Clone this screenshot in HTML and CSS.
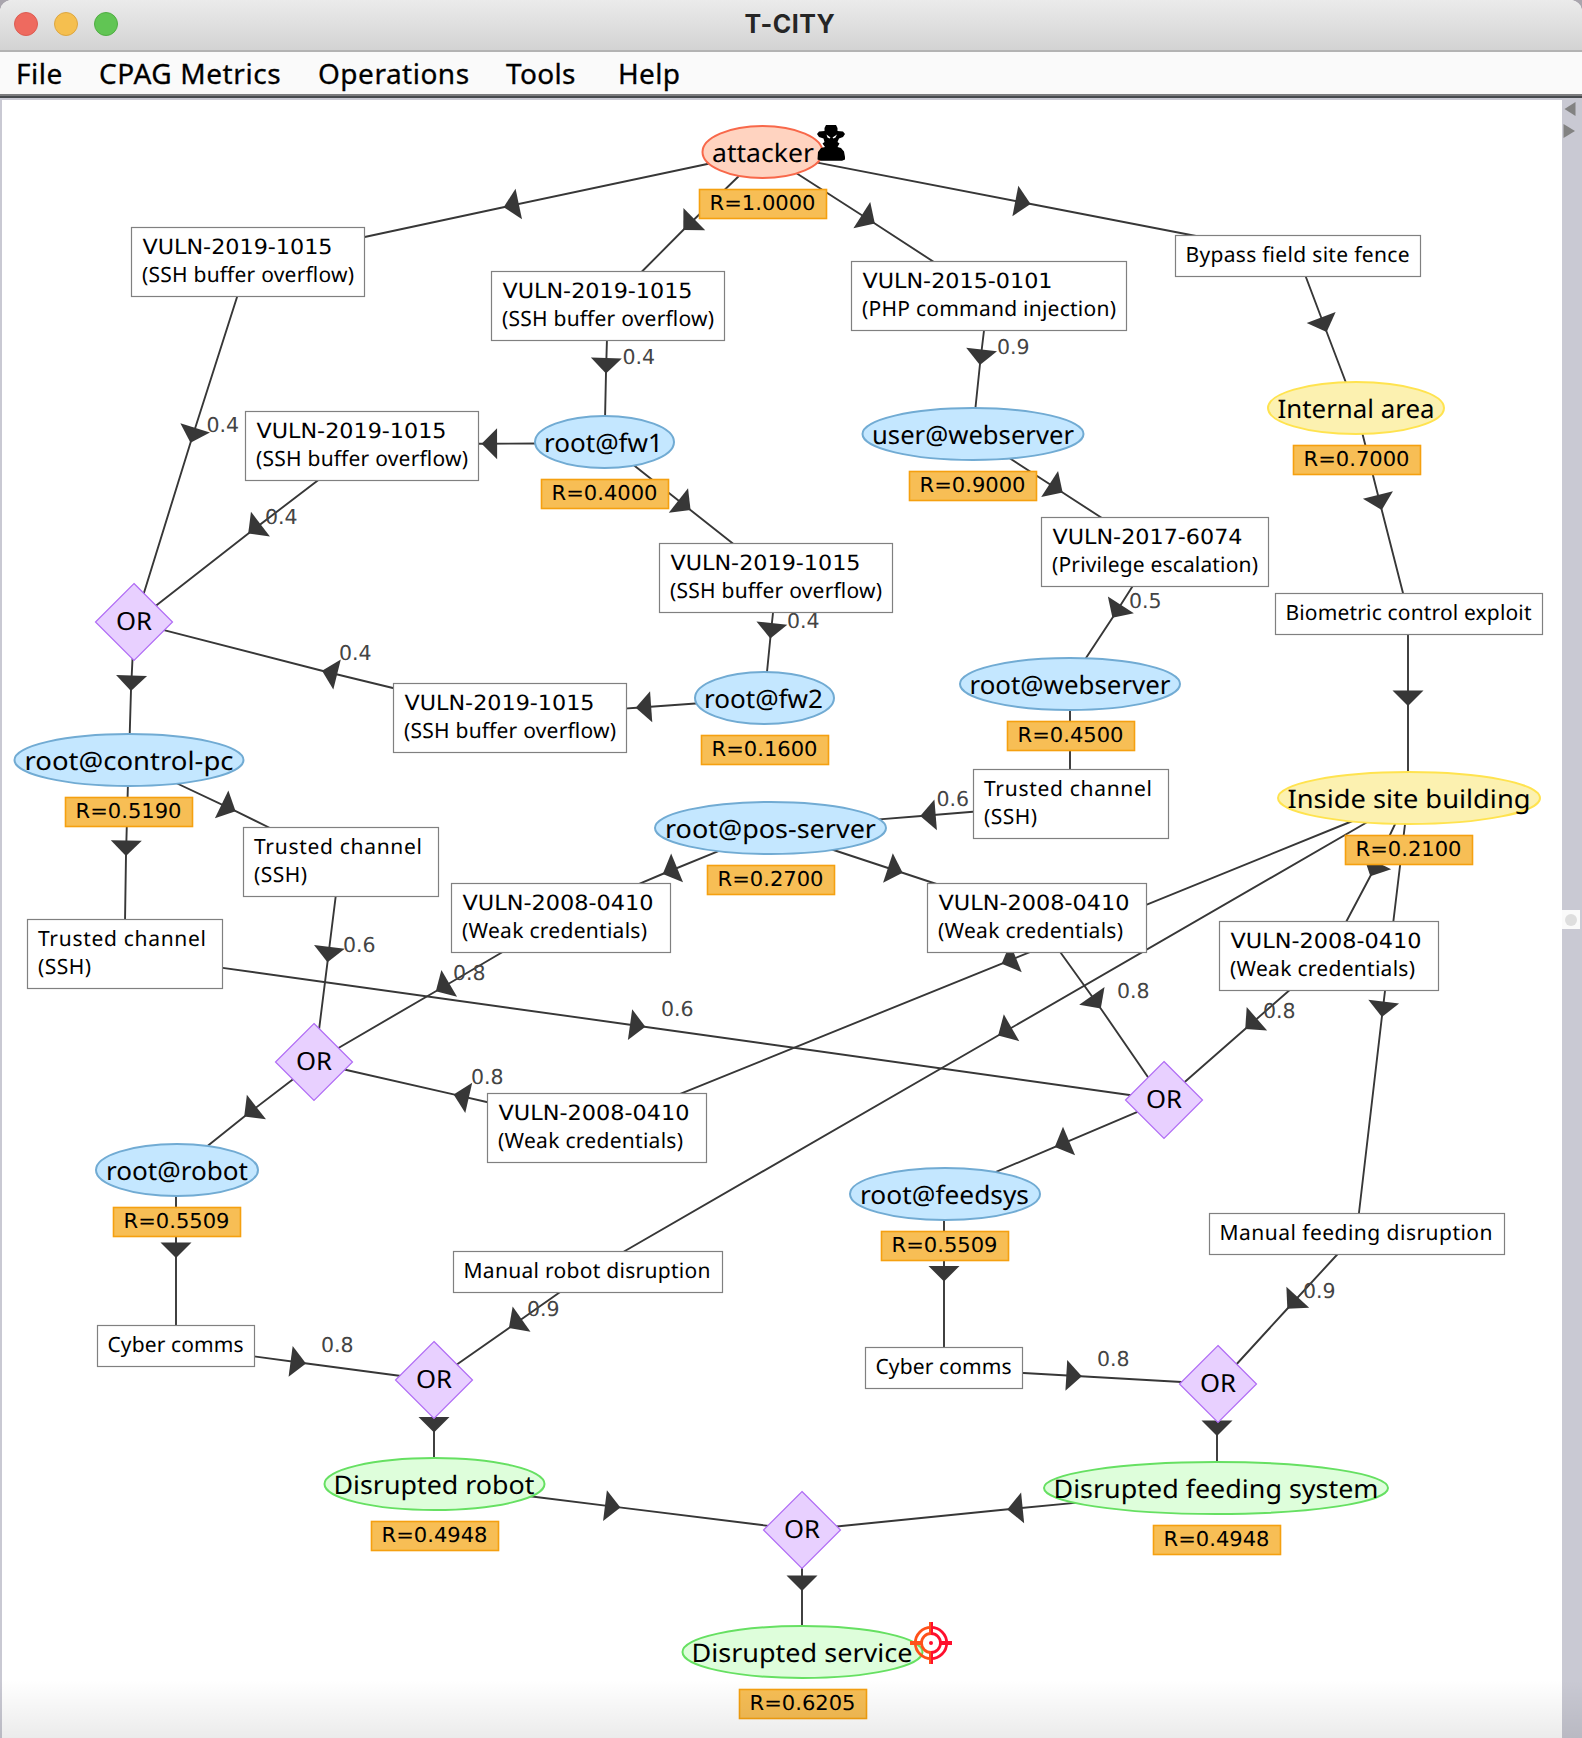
FILE: index.html
```html
<!DOCTYPE html>
<html lang="en">
<head>
<meta charset="utf-8">
<title>T-CITY</title>
<link rel="stylesheet" href="styles.css">
</head>
<body>
<div class="window">
  <header class="titlebar">
    <div class="lights"><i class="light close"></i><i class="light minimise"></i><i class="light expand"></i></div>
    <h1 class="title">T-CITY</h1>
  </header>
  <nav class="menubar">
    <span class="menu file">File</span>
    <span class="menu metrics">CPAG Metrics</span>
    <span class="menu operations">Operations</span>
    <span class="menu tools">Tools</span>
    <span class="menu help">Help</span>
  </nav>
  <main class="workspace">
    <svg class="graph" width="1560" height="1638" viewBox="2 100 1560 1638">
      <defs>
        <marker id="arrow" markerUnits="userSpaceOnUse" markerWidth="32" markerHeight="32" refX="14.5" refY="16" viewBox="0 0 32 32" orient="auto" overflow="visible">
          <path d="M0 0.5 15.500 16 0 31.5Z" fill="#373737"/>
        </marker>
      </defs>

      <g class="edges">
        <polyline points="712,163 504.6,207 360,238"/>
        <polyline points="742,173 684,229.3 640,273.5"/>
        <polyline points="793,171 874,223 937,264"/>
        <polyline points="816,162.4 1029.6,203.7 1196,236"/>
        <polyline points="1304,272 1326.3,331 1348,388"/>
        <polyline points="984.3,328 980,364 975,412"/>
        <polyline points="607,338 606,372.5 605,420"/>
        <polyline points="238,294 190.8,441.7 143,596"/>
        <polyline points="538,443.5 482.6,443.7 476,443.7"/>
        <polyline points="321,478 249,533 153,608"/>
        <polyline points="631,463 689.8,509.5 736,546"/>
        <polyline points="1007,456.5 1061.8,492 1105,520"/>
        <polyline points="773.3,610 770.4,637.5 766.5,677"/>
        <polyline points="1134,584 1113,617 1084,661"/>
        <polyline points="1361.5,430 1381.5,509 1404,597"/>
        <polyline points="1408,632 1408,705 1408,776"/>
        <polyline points="1070,706 1070,742 1070,772"/>
        <polyline points="976,811.5 921.2,816 876,819.6"/>
        <polyline points="699,703.3 636.7,707.7 624,708.6"/>
        <polyline points="397,689 323,671 162,629.7"/>
        <polyline points="132.7,655 131,690 129.6,738"/>
        <polyline points="128,782 126,855 125,922"/>
        <polyline points="174,782 234.7,810.7 272,829"/>
        <polyline points="336,894 327.6,961.3 318.5,1034"/>
        <polyline points="506,950 436.7,990.7 335,1050"/>
        <polyline points="219,967.4 644.4,1026.7 1133,1095.5"/>
        <polyline points="719,850.8 663.7,873.5 638,884.3"/>
        <polyline points="829,848.5 901.7,872.5 938,884.5"/>
        <polyline points="1058,949 1100.2,1007.7 1152,1083"/>
        <polyline points="1355,820 1002.5,963.3 679,1094.4"/>
        <polyline points="1370,820.5 999,1035 621,1253.3"/>
        <polyline points="491,1103 454.6,1094.6 341,1068.7"/>
        <polyline points="1292,988 1246,1028.3 1181,1085.3"/>
        <polyline points="1397,820 1370.8,875.3 1345,924"/>
        <polyline points="1405.4,821 1382,1016 1358.6,1216"/>
        <polyline points="296,1077 245,1116 205,1148"/>
        <polyline points="176,1192 176,1257 176,1328"/>
        <polyline points="251,1356 305,1363.3 403,1376.3"/>
        <polyline points="563,1290 509.7,1327.5 454,1366.5"/>
        <polyline points="434,1415 434,1431.5 434,1463"/>
        <polyline points="1141,1110.4 1055.7,1146.6 992,1173.6"/>
        <polyline points="944,1216 944,1280.5 944,1350"/>
        <polyline points="1019,1372.7 1080.8,1376.2 1186,1382.3"/>
        <polyline points="1340,1251.5 1288,1308 1234,1367"/>
        <polyline points="1217,1416 1217,1435 1217,1466"/>
        <polyline points="528,1496 619.4,1507.4 771,1526.2"/>
        <polyline points="1080,1502.4 1008.2,1509.3 834,1526.8"/>
        <polyline points="802,1564 802,1590 802,1631"/>
      </g>

      <g class="weights">
        <text x="206.500" y="431.7">0.4</text>
        <text x="622.500" y="364">0.4</text>
        <text x="997" y="353.5">0.9</text>
        <text x="265" y="523.5">0.4</text>
        <text x="787" y="627.7">0.4</text>
        <text x="1129" y="608">0.5</text>
        <text x="339" y="660">0.4</text>
        <text x="936.500" y="805.7">0.6</text>
        <text x="343" y="951.7">0.6</text>
        <text x="453" y="980">0.8</text>
        <text x="661" y="1015.7">0.6</text>
        <text x="471" y="1083.7">0.8</text>
        <text x="1117" y="997.7">0.8</text>
        <text x="1263" y="1018">0.8</text>
        <text x="321" y="1352">0.8</text>
        <text x="527" y="1316">0.9</text>
        <text x="1097" y="1365.7">0.8</text>
        <text x="1303" y="1298">0.9</text>
      </g>

      <g class="exploits" transform="translate(0.5 0.5)">
        <g transform="translate(131 227)"><rect width="233" height="69"/><text class="num" x="11" y="26.500" textLength="190" lengthAdjust="spacingAndGlyphs">VULN-2019-1015</text><text x="10.500" y="54.500" textLength="212">(SSH buffer overflow)</text></g>
        <g transform="translate(491 271)"><rect width="233" height="69"/><text class="num" x="11" y="26.500" textLength="190" lengthAdjust="spacingAndGlyphs">VULN-2019-1015</text><text x="10.500" y="54.500" textLength="212">(SSH buffer overflow)</text></g>
        <g transform="translate(851 261)"><rect width="275" height="69"/><text class="num" x="11" y="26.500" textLength="190" lengthAdjust="spacingAndGlyphs">VULN-2015-0101</text><text x="10.500" y="54.500" textLength="254">(PHP command injection)</text></g>
        <g transform="translate(1175 235)"><rect width="245" height="41"/><text x="10" y="26.500" textLength="224">Bypass field site fence</text></g>
        <g transform="translate(245 411)"><rect width="233" height="69"/><text class="num" x="11" y="26.500" textLength="190" lengthAdjust="spacingAndGlyphs">VULN-2019-1015</text><text x="10.500" y="54.500" textLength="212">(SSH buffer overflow)</text></g>
        <g transform="translate(659 543)"><rect width="233" height="69"/><text class="num" x="11" y="26.500" textLength="190" lengthAdjust="spacingAndGlyphs">VULN-2019-1015</text><text x="10.500" y="54.500" textLength="212">(SSH buffer overflow)</text></g>
        <g transform="translate(1041 517)"><rect width="227" height="69"/><text class="num" x="11" y="26.500" textLength="190" lengthAdjust="spacingAndGlyphs">VULN-2017-6074</text><text x="10.500" y="54.500" textLength="206">(Privilege escalation)</text></g>
        <g transform="translate(1275 593)"><rect width="267" height="41"/><text x="10" y="26.500" textLength="246">Biometric control exploit</text></g>
        <g transform="translate(393 683)"><rect width="233" height="69"/><text class="num" x="11" y="26.500" textLength="190" lengthAdjust="spacingAndGlyphs">VULN-2019-1015</text><text x="10.500" y="54.500" textLength="212">(SSH buffer overflow)</text></g>
        <g transform="translate(973 769)"><rect width="195" height="69"/><text x="10.500" y="26.500" textLength="168">Trusted channel</text><text x="10.500" y="54.500" textLength="53">(SSH)</text></g>
        <g transform="translate(243 827)"><rect width="195" height="69"/><text x="10.500" y="26.500" textLength="168">Trusted channel</text><text x="10.500" y="54.500" textLength="53">(SSH)</text></g>
        <g transform="translate(27 919)"><rect width="195" height="69"/><text x="10.500" y="26.500" textLength="168">Trusted channel</text><text x="10.500" y="54.500" textLength="53">(SSH)</text></g>
        <g transform="translate(451 883)"><rect width="219" height="69"/><text class="num" x="11" y="26.500" textLength="191" lengthAdjust="spacingAndGlyphs">VULN-2008-0410</text><text x="10.500" y="54.500" textLength="185">(Weak credentials)</text></g>
        <g transform="translate(927 883)"><rect width="219" height="69"/><text class="num" x="11" y="26.500" textLength="191" lengthAdjust="spacingAndGlyphs">VULN-2008-0410</text><text x="10.500" y="54.500" textLength="185">(Weak credentials)</text></g>
        <g transform="translate(1219 921)"><rect width="219" height="69"/><text class="num" x="11" y="26.500" textLength="191" lengthAdjust="spacingAndGlyphs">VULN-2008-0410</text><text x="10.500" y="54.500" textLength="185">(Weak credentials)</text></g>
        <g transform="translate(487 1093)"><rect width="219" height="69"/><text class="num" x="11" y="26.500" textLength="191" lengthAdjust="spacingAndGlyphs">VULN-2008-0410</text><text x="10.500" y="54.500" textLength="185">(Weak credentials)</text></g>
        <g transform="translate(453 1251)"><rect width="269" height="41"/><text x="10" y="26.500" textLength="247">Manual robot disruption</text></g>
        <g transform="translate(1209 1213)"><rect width="295" height="41"/><text x="10" y="26.500" textLength="273">Manual feeding disruption</text></g>
        <g transform="translate(97 1325)"><rect width="157" height="41"/><text x="10" y="26.500" textLength="136">Cyber comms</text></g>
        <g transform="translate(865 1347)"><rect width="157" height="41"/><text x="10" y="26.500" textLength="136">Cyber comms</text></g>
      </g>

      <g class="gates">
        <g transform="translate(134 622)"><path d="M0-38.500 38.500 0 0 38.500-38.500 0Z"/><text y="8" textLength="36" lengthAdjust="spacingAndGlyphs">OR</text></g>
        <g transform="translate(314 1062)"><path d="M0-38.500 38.500 0 0 38.500-38.500 0Z"/><text y="8" textLength="36" lengthAdjust="spacingAndGlyphs">OR</text></g>
        <g transform="translate(1164 1100)"><path d="M0-38.500 38.500 0 0 38.500-38.500 0Z"/><text y="8" textLength="36" lengthAdjust="spacingAndGlyphs">OR</text></g>
        <g transform="translate(434 1380)"><path d="M0-38.500 38.500 0 0 38.500-38.500 0Z"/><text y="8" textLength="36" lengthAdjust="spacingAndGlyphs">OR</text></g>
        <g transform="translate(1218 1384)"><path d="M0-38.500 38.500 0 0 38.500-38.500 0Z"/><text y="8" textLength="36" lengthAdjust="spacingAndGlyphs">OR</text></g>
        <g transform="translate(802 1530)"><path d="M0-38.500 38.500 0 0 38.500-38.500 0Z"/><text y="8" textLength="36" lengthAdjust="spacingAndGlyphs">OR</text></g>
      </g>

      <g class="states">
        <g class="source" transform="translate(762.5 152)"><ellipse rx="60" ry="26"/><text x="0.5" y="9.5" textLength="102" lengthAdjust="spacingAndGlyphs">attacker</text><rect x="-63" y="37.5" width="127" height="29"/><text class="risk" x="0" y="58" textLength="106" lengthAdjust="spacingAndGlyphs">R=1.0000</text></g>
        <g class="host" transform="translate(604.5 442)"><ellipse rx="69.5" ry="26"/><text x="-1" y="9.5" textLength="119" lengthAdjust="spacingAndGlyphs">root@fw1</text><rect x="-63" y="37.5" width="127" height="29"/><text class="risk" x="0" y="58" textLength="106" lengthAdjust="spacingAndGlyphs">R=0.4000</text></g>
        <g class="host" transform="translate(973 434)"><ellipse rx="110.5" ry="26"/><text y="9.5" textLength="202" lengthAdjust="spacingAndGlyphs">user@webserver</text><rect x="-63.5" y="37.5" width="127" height="29"/><text class="risk" x="-0.5" y="58" textLength="106" lengthAdjust="spacingAndGlyphs">R=0.9000</text></g>
        <g class="area" transform="translate(1356 408)"><ellipse rx="88" ry="26"/><text y="9.5" textLength="157" lengthAdjust="spacingAndGlyphs">Internal area</text><rect x="-62.5" y="37.5" width="127" height="29"/><text class="risk" x="0.5" y="58" textLength="106" lengthAdjust="spacingAndGlyphs">R=0.7000</text></g>
        <g class="host" transform="translate(1070 684)"><ellipse rx="110" ry="26"/><text y="9.5" textLength="201" lengthAdjust="spacingAndGlyphs">root@webserver</text><rect x="-62.5" y="37.5" width="127" height="29"/><text class="risk" x="0.5" y="58" textLength="106" lengthAdjust="spacingAndGlyphs">R=0.4500</text></g>
        <g class="host" transform="translate(764.5 698)"><ellipse rx="69.5" ry="26"/><text x="-1" y="9.5" textLength="119" lengthAdjust="spacingAndGlyphs">root@fw2</text><rect x="-63" y="37.5" width="127" height="29"/><text class="risk" x="0" y="58" textLength="106" lengthAdjust="spacingAndGlyphs">R=0.1600</text></g>
        <g class="host" transform="translate(129 760)"><ellipse rx="114.5" ry="26"/><text y="9.5" textLength="209" lengthAdjust="spacingAndGlyphs">root@control-pc</text><rect x="-63.5" y="37.5" width="127" height="29"/><text class="risk" x="-0.5" y="58" textLength="106" lengthAdjust="spacingAndGlyphs">R=0.5190</text></g>
        <g class="host" transform="translate(770.5 828)"><ellipse rx="115.5" ry="26"/><text y="9.5" textLength="211" lengthAdjust="spacingAndGlyphs">root@pos-server</text><rect x="-63" y="37.5" width="127" height="29"/><text class="risk" x="0" y="58" textLength="106" lengthAdjust="spacingAndGlyphs">R=0.2700</text></g>
        <g class="area" transform="translate(1409 798)"><ellipse rx="131" ry="26"/><text y="9.5" textLength="243" lengthAdjust="spacingAndGlyphs">Inside site building</text><rect x="-63.5" y="37.5" width="127" height="29"/><text class="risk" x="-0.5" y="58" textLength="106" lengthAdjust="spacingAndGlyphs">R=0.2100</text></g>
        <g class="host" transform="translate(177 1170)"><ellipse rx="81" ry="26"/><text y="9.5" textLength="142" lengthAdjust="spacingAndGlyphs">root@robot</text><rect x="-63.5" y="37.5" width="127" height="29"/><text class="risk" x="-0.5" y="58" textLength="106" lengthAdjust="spacingAndGlyphs">R=0.5509</text></g>
        <g class="host" transform="translate(945 1194)"><ellipse rx="95" ry="26"/><text x="-0.5" y="9.5" textLength="169" lengthAdjust="spacingAndGlyphs">root@feedsys</text><rect x="-63.5" y="37.5" width="127" height="29"/><text class="risk" x="-0.5" y="58" textLength="106" lengthAdjust="spacingAndGlyphs">R=0.5509</text></g>
        <g class="goal" transform="translate(434.5 1484)"><ellipse rx="110" ry="26"/><text x="-0.5" y="9.5" textLength="201" lengthAdjust="spacingAndGlyphs">Disrupted robot</text><rect x="-63" y="37.5" width="127" height="29"/><text class="risk" x="0" y="58" textLength="106" lengthAdjust="spacingAndGlyphs">R=0.4948</text></g>
        <g class="goal" transform="translate(1216 1488)"><ellipse rx="172" ry="26"/><text y="9.5" textLength="325" lengthAdjust="spacingAndGlyphs">Disrupted feeding system</text><rect x="-62.5" y="37.5" width="127" height="29"/><text class="risk" x="0.5" y="58" textLength="106" lengthAdjust="spacingAndGlyphs">R=0.4948</text></g>
        <g class="goal" transform="translate(802.5 1652)"><ellipse rx="120" ry="26"/><text x="-0.5" y="9.5" textLength="221" lengthAdjust="spacingAndGlyphs">Disrupted service</text><rect x="-63" y="37.5" width="127" height="29"/><text class="risk" x="0" y="58" textLength="106" lengthAdjust="spacingAndGlyphs">R=0.6205</text></g>
      </g>

      <g class="spy">
        <path d="M824.500 128 826 125H836L837.500 128V131L843 131.500 845 134 843 137 839 138.500 837.500 142 839.500 143.500 837.500 147 841 148 844 151.500 845 157V159.500L842 160.700H821L817.500 159.500 818 152 821 148 825 147 822.500 143.500 824.500 142 823.500 138.500 819 137 817 134 819 131.500 824.500 131Z"/>
        <path class="eyes" d="M826.500 134.500 830.500 137.500 829.500 138.500 827.500 137.500ZM837 134.500 832.500 137.500 833.500 138.500 835.500 137.500Z"/>
      </g>

      <g class="target" transform="translate(931 1643)">
        <path class="ring left" d="M0-15.700A15.700 15.700 0 0 0 0 15.700M0-9.500A9.500 9.500 0 0 0 0 9.500"/>
        <path class="ring right" d="M0-15.700A15.700 15.700 0 0 1 0 15.700M0-9.500A9.500 9.500 0 0 1 0 9.500"/>
        <path class="orange" d="M-2-21H0V-8H-2ZM-2 8H0V21H-2ZM-21-2H-9V2H-21Z"/>
        <path class="red" d="M0-21H2V-8H0ZM0 8H2V21H0ZM21-2H9V2H21Z"/>
        <circle class="red" r="2"/>
      </g>
    </svg>
    <aside class="divider">
      <svg class="toggles" width="20" height="40" viewBox="0 0 20 40"><path d="M13.500 2V16L2.500 9Z"/><path d="M1.500 24V38L13 31Z"/></svg>
      <div class="knob"><i></i></div>
    </aside>
  </main>
  <div class="shade"></div>
</div>
</body>
</html>
```
FILE: styles.css
```css
* { box-sizing: border-box; }
body { margin: 0; background: #a9a5ad; }

.window {
  position: relative;
  width: 1582px;
  height: 1738px;
  display: flex;
  flex-direction: column;
  overflow: hidden;
  border-radius: 12px 12px 0 0;
  background: #fff;
}

.titlebar {
  height: 52px;
  display: grid;
  grid-template-columns: 1fr auto 1fr;
  align-items: center;
  padding: 0 16px 2px 14px;
  background: linear-gradient(#ebebeb, #d3d3d3);
  border-bottom: 2px solid #b3b3b3;
}
.lights { display: flex; gap: 16px; }
.light { width: 24px; height: 24px; border-radius: 50%; border: 1px solid; }
.close { background: #ee6a5f; border-color: #dc5c52; }
.minimise { background: #f5bf4f; border-color: #dca640; }
.expand { background: #61c554; border-color: #50ad43; }
.title {
  margin: 0;
  font: 700 25px/30px Inter, "Liberation Sans", sans-serif;
  letter-spacing: 0.5px;
  color: #262626;
}

.menubar {
  height: 42px;
  display: flex;
  align-items: center;
  padding-left: 16px;
  background: #fafafa;
  font: 28px/42px "Noto Sans", sans-serif;
  color: #000;
}
.menu { white-space: nowrap; -webkit-text-stroke: 0.3px #000; }
.file { width: 83px; letter-spacing: 0.5px; }
.metrics { width: 219px; letter-spacing: 0.6px; }
.operations { width: 188px; letter-spacing: 0.5px; }
.tools { width: 112px; letter-spacing: 0.3px; }
.help { letter-spacing: 0.3px; }

.workspace {
  flex: 1;
  display: flex;
  border-top: 2px solid #c9c9d3;
  border-left: 2px solid #c9c9d3;
  box-shadow: 0 -2px #474a4e, 0 -4px #7c7c7e;
  margin-top: 4px;
}
.graph { display: block; flex: none; background: #fff; }

.edges polyline {
  fill: none;
  stroke: #373737;
  stroke-width: 1.9;
  marker-mid: url(#arrow);
}
.weights text { font: 20.5px "DejaVu Sans", sans-serif; fill: #444; }

.exploits rect { fill: #fff; stroke: #808080; stroke-width: 1.2; }
.exploits text { font: 21px "Noto Sans", sans-serif; fill: #000; }
.exploits .num { font: 21px "DejaVu Sans", sans-serif; }

.gates path { fill: #e8d0ff; stroke: #b06cf5; stroke-width: 1.2; }
.gates text { font: 25px "Noto Sans", sans-serif; text-anchor: middle; }

.states ellipse { stroke-width: 2; }
.states text { font: 25.5px "Noto Sans", sans-serif; text-anchor: middle; fill: #000; }
.states .risk { font: 20.5px "DejaVu Sans", sans-serif; }
.states rect { fill: #f7be55; stroke: #f5a010; stroke-width: 1.6; }
.source ellipse { fill: #ffd3c0; stroke: #f8684a; }
.host ellipse { fill: #c4e7ff; stroke: #71abd3; }
.area ellipse { fill: #fcf1b0; stroke: #ffe34f; }
.goal ellipse { fill: #defedb; stroke: #66e062; }

text { text-rendering: geometricPrecision; }

.spy { fill: #000; }
.spy .eyes { fill: #fff; }

.target .ring { fill: none; stroke-width: 2.8; }
.target .left { stroke: #ff5019; }
.target .right { stroke: #ff0f2d; }
.target .orange { fill: #ff5019; }
.target .red { fill: #ff0f2d; }

.divider { width: 20px; background: #c9c9d3; }
.toggles { display: block; fill: #828282; }
.knob {
  width: 18px;
  height: 19px;
  margin-top: 770px;
  display: grid;
  place-items: center;
  background: #fafafa;
}
.knob i { width: 12px; height: 12px; border-radius: 50%; background: #dedede; }

.shade {
  position: absolute;
  inset: auto 0 0;
  height: 58px;
  background: linear-gradient(rgba(0, 0, 0, 0), rgba(0, 0, 0, 0.08));
}
```
